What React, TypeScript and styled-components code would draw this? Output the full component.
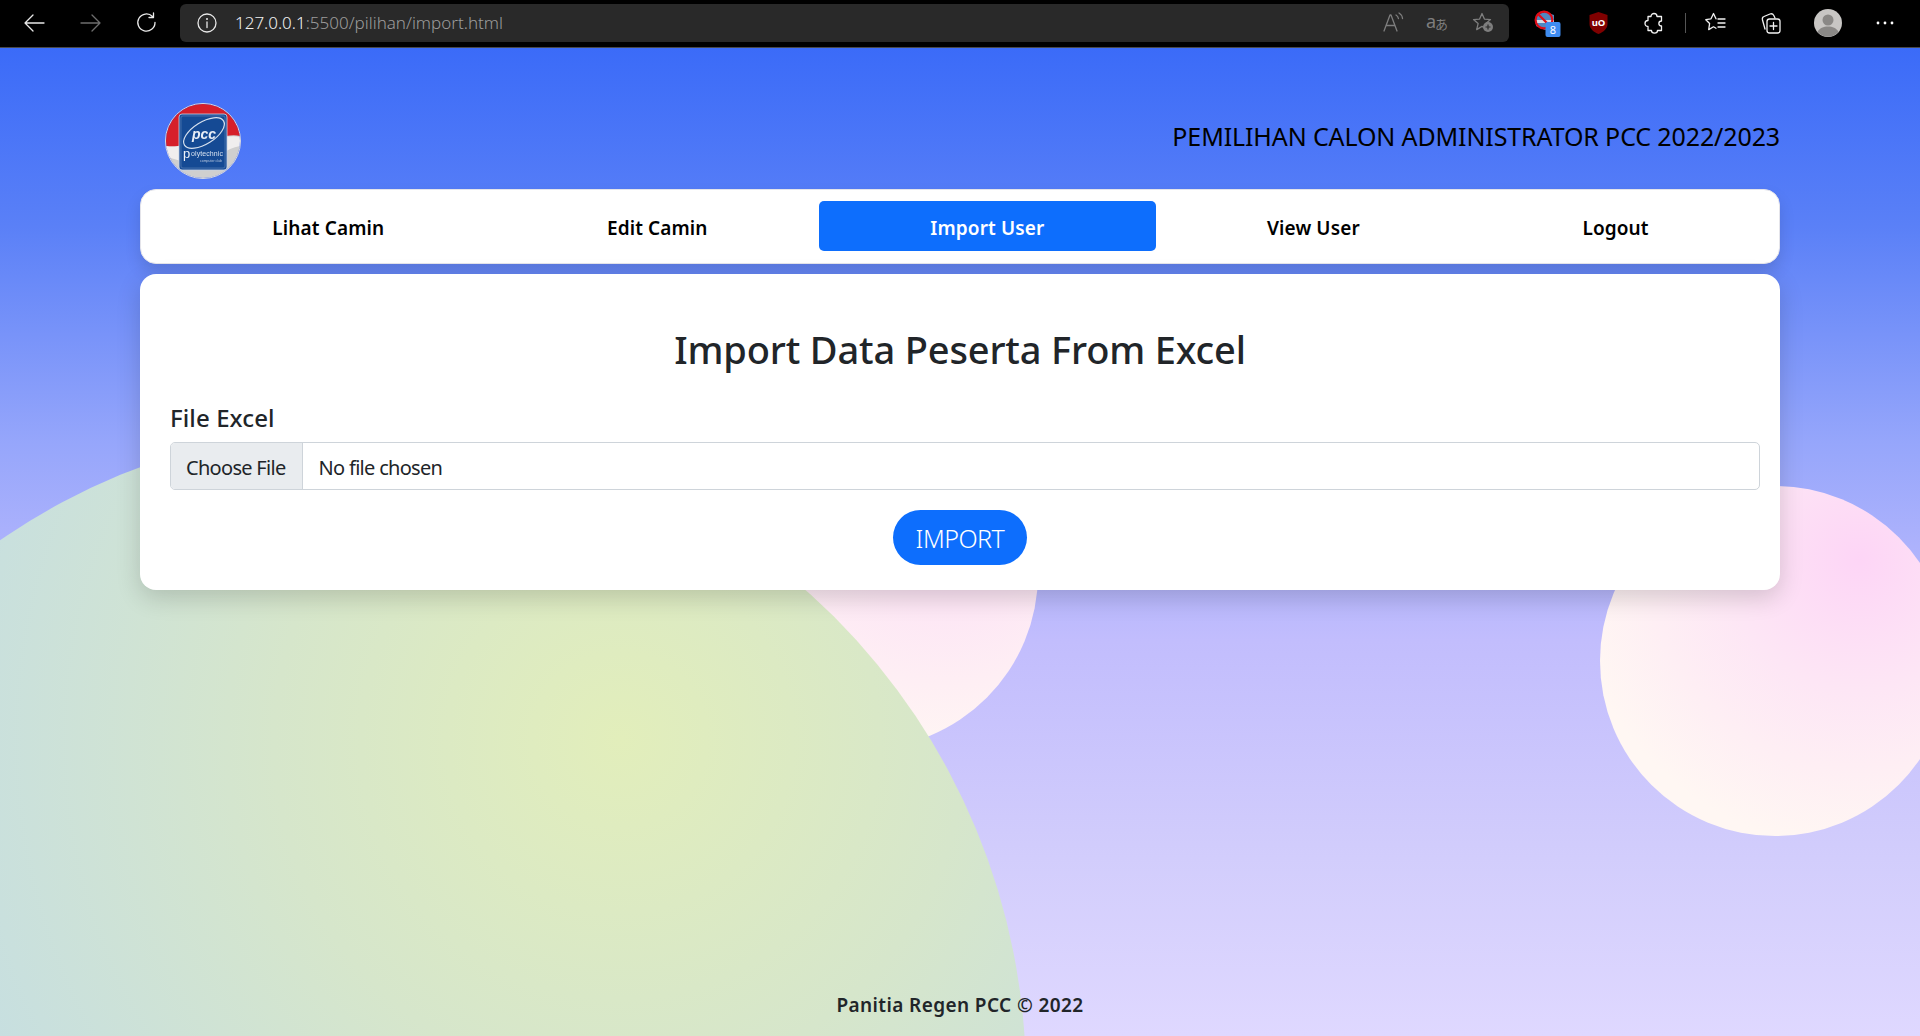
import React from "react";
import styled, { createGlobalStyle } from "styled-components";

const FONT = `"Noto Sans", "Open Sans", "Liberation Sans", sans-serif`;

const Global = createGlobalStyle`
  html, body { margin: 0; padding: 0; height: 100%; overflow: hidden; }
  body { font-family: ${FONT}; color: #212529; }
  * { box-sizing: border-box; }
`;

const Screen = styled.div`
  width: 1920px;
  height: 1036px;
  display: flex;
  flex-direction: column;
  overflow: hidden;
`;

/* browser chrome */
const Chrome = styled.header`
  flex: 0 0 48px;
  height: 48px;
  background: #000;
  border-bottom: 1px solid #4a4a4a;
  display: flex;
  align-items: center;
  padding: 0 25px 2px 24px;
`;
const NavIcons = styled.div`
  display: flex;
  align-items: center;
  gap: 35px;
  margin-right: 24px;
`;
const AddressBar = styled.div`
  width: 1329px;
  height: 38px;
  background: #292929;
  border-radius: 6px;
  display: flex;
  align-items: center;
  padding: 0 15px 0 17px;
`;
const Url = styled.div`
  margin-left: 18px;
  flex: 1;
  font-size: 17px;
  font-weight: 300;
  color: #f0f0f0;
  white-space: nowrap;
  span { color: #9c9c9c; }
`;
const BarIcons = styled.div`
  display: flex;
  align-items: center;
  gap: 22px;
`;
const ToolIcons = styled.div`
  display: flex;
  align-items: center;
  margin-left: 24px;
  flex: 1;
`;
const Tool = styled.div<{ $w: number; $gap?: number }>`
  width: ${(p) => p.$w}px;
  margin-right: ${(p) => p.$gap ?? 0}px;
  display: flex;
  align-items: center;
  justify-content: center;
`;
const Divider = styled.div`
  width: 1px;
  height: 20px;
  background: #555;
  margin-right: 19px;
`;

/* page */
const Page = styled.main`
  position: relative;
  flex: 1;
  display: flex;
  flex-direction: column;
  overflow: hidden;
  background: linear-gradient(to bottom, #3b6bf8 0%, #5a80f7 18%, #96a6fb 40%, #c2bdfd 60%, #d2cdfc 82%, #dfd8ff 100%);
`;
const Blob = styled.div<{ $x: number; $y: number; $d: number; $big?: boolean }>`
  position: absolute;
  left: ${(p) => p.$x}px;
  top: ${(p) => p.$y}px;
  width: ${(p) => p.$d}px;
  height: ${(p) => p.$d}px;
  border-radius: 50%;
  background: ${(p) =>
    p.$big
      ? "radial-gradient(circle 690px at 69% 24%, #e2eebb 0%, #d6e6cb 50%, #c7dfe0 100%)"
      : "radial-gradient(circle 290px at 74% 21%, #fdd5f6 0%, #fde6f5 45%, #fff7f3 100%)"};
`;
const Content = styled.div`
  position: relative;
  flex: 1;
  display: flex;
  flex-direction: column;
  padding: 55px 140px 0;
`;
const Top = styled.div`
  display: flex;
  justify-content: space-between;
  align-items: flex-start;
  padding-left: 25px;
  margin-bottom: 10px;
`;
const Logo = styled.div`
  width: 76px;
  height: 76px;
  border-radius: 50%;
  border: 1px solid #d8d8e0;
  overflow: hidden;
  svg { display: block; filter: blur(0.35px); }
`;
const SiteTitle = styled.h1`
  margin: 15px 0 0;
  font-size: 25px;
  line-height: 36px;
  font-weight: 400;
  letter-spacing: -0.12px;
  color: #000;
`;
const Menu = styled.nav`
  height: 75px;
  background: #fff;
  border-radius: 16px;
  border: 1px solid #e4e4ea;
  box-shadow: 0 8px 16px rgba(0, 0, 0, 0.12);
  display: flex;
  align-items: flex-start;
  padding: 11px 19px 0 20px;
  margin-bottom: 10px;
`;
const MenuItem = styled.a<{ $active?: boolean }>`
  flex: 1 1 auto;
  height: 50px;
  display: flex;
  align-items: center;
  justify-content: center;
  padding-top: 3px;
  border-radius: 5px;
  font-size: 19px;
  font-weight: 600;
  letter-spacing: 0.12px;
  color: ${(p) => (p.$active ? "#fff" : "#000")};
  background: ${(p) => (p.$active ? "#0d6efd" : "transparent")};
`;
const Card = styled.section`
  height: 316px;
  background: #fff;
  border-radius: 16px;
  box-shadow: 0 8px 24px rgba(0, 0, 0, 0.16);
  padding: 49px 20px 0;
  display: flex;
  flex-direction: column;
`;
const Heading = styled.h2`
  margin: 0 0 25px;
  text-align: center;
  font-size: 38px;
  line-height: 52px;
  font-weight: 500;
  letter-spacing: -0.15px;
  color: #212529;
`;
const Field = styled.div`
  display: flex;
  flex-direction: column;
  padding-left: 10px;
`;
const Label = styled.label`
  font-size: 24px;
  line-height: 36px;
  font-weight: 500;
  letter-spacing: 0.1px;
  margin-bottom: 6px;
`;
const FileInput = styled.input`
  display: block;
  width: 100%;
  height: 48px;
  padding: 10px 16px 6px 15px;
  font-family: ${FONT};
  font-size: 20px;
  line-height: 30px;
  letter-spacing: -0.7px;
  color: #212529;
  background: #fff;
  border: 1px solid #ced4da;
  border-radius: 5px;
  overflow: hidden;
  &::file-selector-button {
    font: inherit;
    letter-spacing: inherit;
    height: 46px;
    padding: 10px 16px 6px 15px;
    margin: -10px 16px -6px -15px;
    color: #212529;
    background: #e9ecef;
    border: 0 solid #ced4da;
    border-right-width: 1px;
    border-radius: 0;
  }
`;
const Actions = styled.div`
  display: flex;
  justify-content: center;
  margin-top: 20px;
`;
const ImportButton = styled.button`
  width: 134px;
  height: 55px;
  border: 0;
  border-radius: 28px;
  background: #0d6efd;
  color: #fff;
  font-family: ${FONT};
  font-size: 25px;
  font-weight: 300;
  letter-spacing: -0.5px;
`;
const Footer = styled.footer`
  margin-top: auto;
  height: 62px;
  display: flex;
  align-items: center;
  justify-content: center;
  font-size: 19px;
  font-weight: 600;
  letter-spacing: 0.4px;
  color: #212529;
`;

const L = { fill: "none", stroke: "currentColor", strokeWidth: 1.3, strokeLinecap: "round", strokeLinejoin: "round" } as const;

const Ic = styled.svg<{ $c: string }>`
  display: block;
  overflow: visible;
  color: ${(p) => p.$c};
`;

const Back = ({ c = "#e8e8e8", flip = false }: { c?: string; flip?: boolean }) => (
  <Ic $c={c} width="21" height="20" viewBox="0 0 21 20">
    <path {...L} d={flip ? "M1 10H20M12 2l8 8-8 8" : "M20 10H1M9 2l-8 8 8 8"} />
  </Ic>
);
const Reload = () => (
  <Ic $c="#eaeaea" width="20" height="21" viewBox="0 0 20 21">
    <path {...L} d="M16.5 4.500A8.600 8.600 0 1 0 19 10.500M17.500 1v4.500H13" />
  </Ic>
);
const Info = () => (
  <Ic $c="#e8e8e8" width="20" height="20" viewBox="0 0 20 20">
    <circle {...L} cx="10" cy="10" r="9" />
    <path {...L} d="M10 9v5.500" />
    <circle cx="10" cy="6" r="1" fill="currentColor" />
  </Ic>
);
const ReadAloud = () => (
  <Ic $c="#7e7e7e" width="21" height="20" viewBox="0 0 21 20">
    <path {...L} d="M1 18 7 2h1l6 16M3.200 12.500h8.500M13 2c1.400.8 2.200 2 2.400 3.500M16 0c2 1.200 3.300 3.200 3.500 5.500" />
  </Ic>
);
const Translate = () => (
  <Ic $c="#7e7e7e" width="24" height="20" viewBox="0 0 24 20">
    <text x="0" y="15" fontSize="18" fill="currentColor" fontFamily="'Noto Sans'">a</text>
    <text x="9" y="15.500" fontSize="13" fill="currentColor" fontFamily="'Noto Sans CJK JP'">あ</text>
  </Ic>
);
const starPath = "M10 1.500l2.400 5.600 6.100.5-4.600 4 1.400 6L10 14.400 4.700 17.600l1.400-6-4.600-4 6.100-.5z";
const StarAdd = () => (
  <Ic $c="#7e7e7e" width="22" height="21" viewBox="0 0 22 21">
    <path {...L} d={starPath} />
    <circle cx="16" cy="15" r="5" fill="#7e7e7e" />
    <path d="M13.500 15h5M16 12.500v5" stroke="#292929" strokeWidth="1.200" />
  </Ic>
);
const BlockExt = () => (
  <Ic $c="#fff" width="28" height="28" viewBox="0 0 28 28">
    <path d="M3 6l9-3 9 3v11l-9 4-9-4z" fill="#4f87c0" />
    <path d="M3 11l18 0v3H3z" fill="#d5dce6" />
    <circle cx="11" cy="11" r="8.400" fill="none" stroke="#e00c17" strokeWidth="2.200" />
    <path d="M5 5l12 12" stroke="#e00c17" strokeWidth="2.200" />
    <rect x="12.500" y="13" width="15" height="15" rx="2" fill="#3f8cf0" />
    <text x="20" y="25" textAnchor="middle" fontSize="11" fill="#fff" fontFamily="'Noto Sans'">8</text>
  </Ic>
);
const Shield = () => (
  <Ic $c="#fff" width="19" height="22" viewBox="0 0 19 22">
    <path d="M9.500 0l9 3v9c0 4.500-4 8-9 10-5-2-9-5.500-9-10V3z" fill="#800000" />
    <text x="9.500" y="14" textAnchor="middle" fontSize="9.500" fontWeight="700" fill="#fff" fontFamily="'Noto Sans'">uO</text>
  </Ic>
);
const Puzzle = () => (
  <Ic $c="#f2f2f2" width="20" height="22" viewBox="0 0 20 22">
    <path {...L} d="M7 4.500c0-4 6-4 6 0h4.500v4.500c-3.500 0-3.500 5 0 5v4.500H13.500c0 3.500-6 3.500-6 0H4v-4C0 14.500 0 8.500 4 8.500v-4z" />
  </Ic>
);
const Favs = () => (
  <Ic $c="#f2f2f2" width="21" height="21" viewBox="0 0 21 21">
    <path {...L} d="M11 6.800 8.500 1.500 6 6.800.8 7.700l3.800 3.800-.9 6.100 4.800-2.800 2.500 1.400M13 7h7M13 11h7M13 15h7" />
  </Ic>
);
const Collections = () => (
  <Ic $c="#f2f2f2" width="21" height="22" viewBox="0 0 21 22">
    <path {...L} d="M5 17 2.500 8c-.5-2 0-3 1.500-3.500l6-2.500c1.500-.5 3 0 3.800 1.500L15 6" />
    <rect {...L} x="7" y="7" width="13" height="14" rx="2.500" />
    <path {...L} d="M13.500 10.500v7M10 14h7" />
  </Ic>
);
const Avatar = () => (
  <Ic $c="#ccc" width="28" height="28" viewBox="0 0 28 28">
    <circle cx="14" cy="14" r="14" fill="#c8c6c4" />
    <circle cx="14" cy="11" r="5.500" fill="#8a8886" />
    <path d="M3.500 23c2-4 6-5.500 10.500-5.500s8.500 1.500 10.500 5.500A14 14 0 0 1 3.500 23z" fill="#8a8886" />
  </Ic>
);
const Dots = () => (
  <Ic $c="#fff" width="18" height="4" viewBox="0 0 18 4">
    <circle cx="2" cy="2" r="1.400" fill="currentColor" />
    <circle cx="9" cy="2" r="1.400" fill="currentColor" />
    <circle cx="16" cy="2" r="1.400" fill="currentColor" />
  </Ic>
);
const LogoArt = () => (
  <svg width="74" height="74" viewBox="0 0 74 74">
    <rect width="74" height="74" fill="#cfcfcf" />
    <path d="M0 0h74v32c-12-3-24 4-40 6S10 44 0 42z" fill="#d61f2a" />
    <path d="M0 42c12 2 22-2 36-4s26-8 38-5v9c-14 2-24 14-38 16S10 56 0 52z" fill="#f0eeee" />
    <rect x="13" y="10" width="48" height="56" rx="3" fill="#1b4f99" stroke="#c5d3e6" strokeWidth="0.800" />
    <rect x="15" y="12" width="44" height="52" rx="2" fill="#154a94" stroke="#6f90bf" strokeWidth="0.500" />
    <ellipse cx="38" cy="29" rx="23" ry="11" fill="none" stroke="#d6e0ee" strokeWidth="1.200" transform="rotate(-32 38 29)" />
    <text x="38" y="35" textAnchor="middle" fontSize="14" fontWeight="700" fontStyle="italic" fill="#e8eef7" fontFamily="'Liberation Sans'">pcc</text>
    <text x="17" y="54" fontSize="13" fill="#eef3fa" fontFamily="'Liberation Sans'">p</text>
    <text x="25" y="52" fontSize="7" fill="#d5e0ef" fontFamily="'Liberation Sans'" textLength="32">olytechnic</text>
    <text x="34" y="58" fontSize="3.500" fill="#b9c9df" fontFamily="'Liberation Sans'">computer club</text>
  </svg>
);

const items = ["Lihat Camin", "Edit Camin", "Import User", "View User", "Logout"];

export default function App() {
  return (
    <Screen>
      <Global />
      <Chrome>
        <NavIcons>
          <Back />
          <Back c="#6e6e6e" flip />
          <Reload />
        </NavIcons>
        <AddressBar>
          <Info />
          <Url>
            127.0.0.1<span>:5500/pilihan/import.html</span>
          </Url>
          <BarIcons>
            <ReadAloud />
            <Translate />
            <StarAdd />
          </BarIcons>
        </AddressBar>
        <ToolIcons>
          <Tool $w={28} $gap={28}><BlockExt /></Tool>
          <Tool $w={19} $gap={36}><Shield /></Tool>
          <Tool $w={20} $gap={21}><Puzzle /></Tool>
          <Divider />
          <Tool $w={21} $gap={34}><Favs /></Tool>
          <Tool $w={21} $gap={33}><Collections /></Tool>
          <Tool $w={28} $gap={34}><Avatar /></Tool>
          <Tool $w={18}><Dots /></Tool>
        </ToolIcons>
      </Chrome>
      <Page>
        <Blob $x={688} $y={351} $d={350} />
        <Blob $x={1600} $y={438} $d={350} />
        <Blob $big $x={-284} $y={377} $d={1310} />
        <Content>
          <Top>
            <Logo><LogoArt /></Logo>
            <SiteTitle>PEMILIHAN CALON ADMINISTRATOR PCC 2022/2023</SiteTitle>
          </Top>
          <Menu>
            {items.map((t) => (
              <MenuItem key={t} $active={t === "Import User"}>{t}</MenuItem>
            ))}
          </Menu>
          <Card>
            <Heading>Import Data Peserta From Excel</Heading>
            <Field>
              <Label htmlFor="file">File Excel</Label>
              <FileInput id="file" type="file" />
            </Field>
            <Actions>
              <ImportButton>IMPORT</ImportButton>
            </Actions>
          </Card>
          <Footer>Panitia Regen PCC © 2022</Footer>
        </Content>
      </Page>
    </Screen>
  );
}
